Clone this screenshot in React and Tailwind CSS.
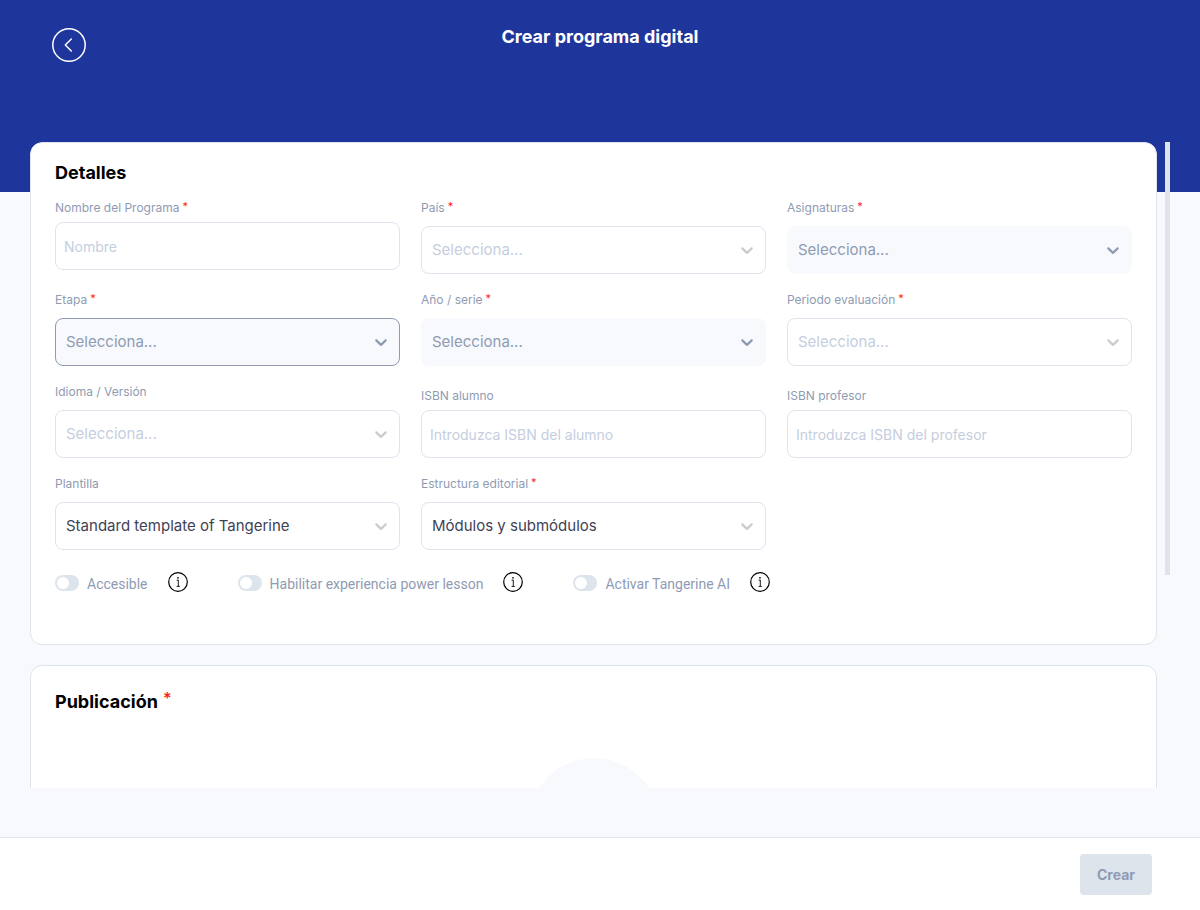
import { useState } from "react";

const CHEVRON =
  "M4.516 7.548c0.436-0.446 1.043-0.481 1.576 0l3.908 3.747 3.908-3.747c0.533-0.481 1.141-0.446 1.574 0 0.436 0.445 0.408 1.197 0 1.615-0.406 0.418-4.695 4.502-4.695 4.502-0.217 0.223-0.502 0.335-0.787 0.335s-0.57-0.112-0.789-0.335c0 0-4.287-4.084-4.695-4.502s-0.436-1.17 0-1.615z";

function Label({ id, text, required }) {
  return (
    <label htmlFor={id} className="flex items-start gap-[3px] text-xs leading-[18px] text-[#8f9bb3]">
      {text}
      {required && <span className="text-[11px] leading-[14px] text-[#ff1f1f]">*</span>}
    </label>
  );
}

function TextField({ id, label, required, placeholder, className = "" }) {
  return (
    <div className={`flex flex-col gap-[5px] ${className}`}>
      <Label id={id} text={label} required={required} />
      <input
        id={id}
        type="text"
        placeholder={placeholder}
        className="h-12 w-full rounded-lg border border-[#dde4ec] bg-white px-2 text-sm text-[#3f4254] outline-none placeholder:text-[#c5cee0]"
      />
    </div>
  );
}

const TONES = {
  empty: "border-[#dde4ec] bg-white text-[#c5cee0]",
  filled: "border-[#dde4ec] bg-white text-[#3f4254]",
  soft: "border-[#f7f9fd] bg-[#f7f9fd] text-[#8f9bb3]",
  active: "border-[#8f9bb3] bg-[#f7f9fd] text-[#8f9bb3]",
};

function SelectField({ id, label, required, value = "Selecciona...", tone = "empty" }) {
  const strong = tone === "soft" || tone === "active";
  return (
    <div className="flex flex-col gap-[9px]">
      <Label id={id} text={label} required={required} />
      <div className="relative">
        <select
          id={id}
          className={`block h-12 w-full appearance-none rounded-lg border pr-10 pl-[10px] text-[15px] outline-none ${TONES[tone]}`}
        >
          <option>{value}</option>
        </select>
        <svg
          viewBox="0 0 20 20"
          aria-hidden="true"
          className={`pointer-events-none absolute top-[14px] right-[9px] size-5 fill-current ${strong ? "text-[#8f9bb3]" : "text-[#cccccc]"}`}
        >
          <path d={CHEVRON} />
        </svg>
      </div>
    </div>
  );
}

function Toggle({ id, label }) {
  return (
    <div className="flex items-center">
      <input
        id={id}
        type="checkbox"
        role="switch"
        className="mt-[2px] h-4 w-6 shrink-0 appearance-none rounded-full bg-[#dde4ec] p-[2px] before:block before:size-3 before:rounded-full before:bg-white checked:bg-[#1e359c] checked:before:ml-2"
      />
      <label htmlFor={id} className="pt-1 pl-2 font-['Roboto',sans-serif] text-sm text-[#8f9bb3]">
        {label}
      </label>
      <button type="button" aria-label={`Información: ${label}`} className="ml-5">
        <svg viewBox="0 0 20 20" className="block size-5" fill="none" stroke="#000" strokeWidth="1.2">
          <circle cx="10" cy="10" r="9.3" />
          <path d="M8.6 8.2l1.7-.2v6.2M8.6 14.4h3.2" strokeWidth="0.9" />
          <circle cx="10" cy="5.8" r="0.85" fill="#000" stroke="none" />
        </svg>
      </button>
    </div>
  );
}

export default function App() {
  const [progress, setProgress] = useState(0);

  const onScroll = (e) => {
    const el = e.currentTarget;
    setProgress((el.scrollTop / el.scrollHeight) * el.clientHeight);
  };

  return (
    <div className="flex h-screen flex-col bg-[#f7f9fd] font-['Inter',sans-serif]">
      <header className="grid h-48 shrink-0 grid-cols-[1fr_auto_1fr] items-start bg-[#1e359c] px-[52px] pt-6 text-white">
        <button type="button" aria-label="Volver" className="mt-1 size-[34px] rounded-full">
          <svg viewBox="0 0 34 34" className="block size-full" fill="none" stroke="currentColor" strokeWidth="1.5" strokeLinecap="round" strokeLinejoin="round">
            <circle cx="17" cy="17" r="16.2" />
            <path d="M19.3 11L13.3 17l6 6" />
          </svg>
        </button>
        <h1 className="text-lg leading-[26px] font-bold">Crear programa digital</h1>
      </header>

      <main className="relative -mt-[50px] mb-[49px] flex min-h-0 flex-1 gap-2 px-[30px]">
        <form
          id="programa"
          onScroll={onScroll}
          onSubmit={(e) => e.preventDefault()}
          className="flex min-w-0 flex-1 flex-col gap-5 overflow-y-auto rounded-t-xl [scrollbar-width:none]"
        >
          <section className="shrink-0 rounded-xl border border-[#dde4ec] bg-white px-6 pt-4 pb-[50px]">
            <h2 className="text-lg leading-7 font-bold text-black">Detalles</h2>
            <div className="mt-3 grid grid-cols-3 items-end gap-x-[21px] gap-y-[17px]">
              <TextField id="nombre" label="Nombre del Programa" required placeholder="Nombre" className="self-start" />
              <SelectField id="pais" label="País" required />
              <SelectField id="asignaturas" label="Asignaturas" required tone="soft" />
              <SelectField id="etapa" label="Etapa" required tone="active" />
              <SelectField id="serie" label="Año / serie" required tone="soft" />
              <SelectField id="periodo" label="Periodo evaluación" required />
              <SelectField id="idioma" label="Idioma / Versión" />
              <TextField id="isbn-alumno" label="ISBN alumno" placeholder="Introduzca ISBN del alumno" />
              <TextField id="isbn-profesor" label="ISBN profesor" placeholder="Introduzca ISBN del profesor" />
              <SelectField id="plantilla" label="Plantilla" value="Standard template of Tangerine" tone="filled" />
              <SelectField id="estructura" label="Estructura editorial" required value="Módulos y submódulos" tone="filled" />
            </div>
            <div className="mt-5 flex flex-wrap gap-x-[50px] gap-y-3">
              <Toggle id="accesible" label="Accesible" />
              <Toggle id="power-lesson" label="Habilitar experiencia power lesson" />
              <Toggle id="tangerine-ai" label="Activar Tangerine AI" />
            </div>
          </section>

          <section className="flex shrink-0 flex-col rounded-xl border border-[#dde4ec] bg-white px-6 pt-[22px] pb-[220px]">
            <h2 className="flex gap-[5px] text-lg leading-7 font-bold text-black">
              Publicación
              <span className="text-base leading-5 font-semibold text-[#ff1f1f]">*</span>
            </h2>
            <div className="mt-[42px] size-[130px] self-center rounded-full bg-[#f7f9fd]" />
          </section>
        </form>
        <div className="w-[5px]" aria-hidden="true">
          <div className="h-[67%] bg-[#dde4ec]" style={{ marginTop: `${progress}px` }} />
        </div>
      </main>

      <footer className="flex shrink-0 justify-end border-t border-[#dde4ec] bg-white px-12 pt-4 pb-[15px]">
        <button
          type="submit"
          form="programa"
          disabled
          className="h-[41px] rounded bg-[#dde4ec] px-[17px] text-sm font-bold text-[#8f9bb3]"
        >
          Crear
        </button>
      </footer>
    </div>
  );
}
